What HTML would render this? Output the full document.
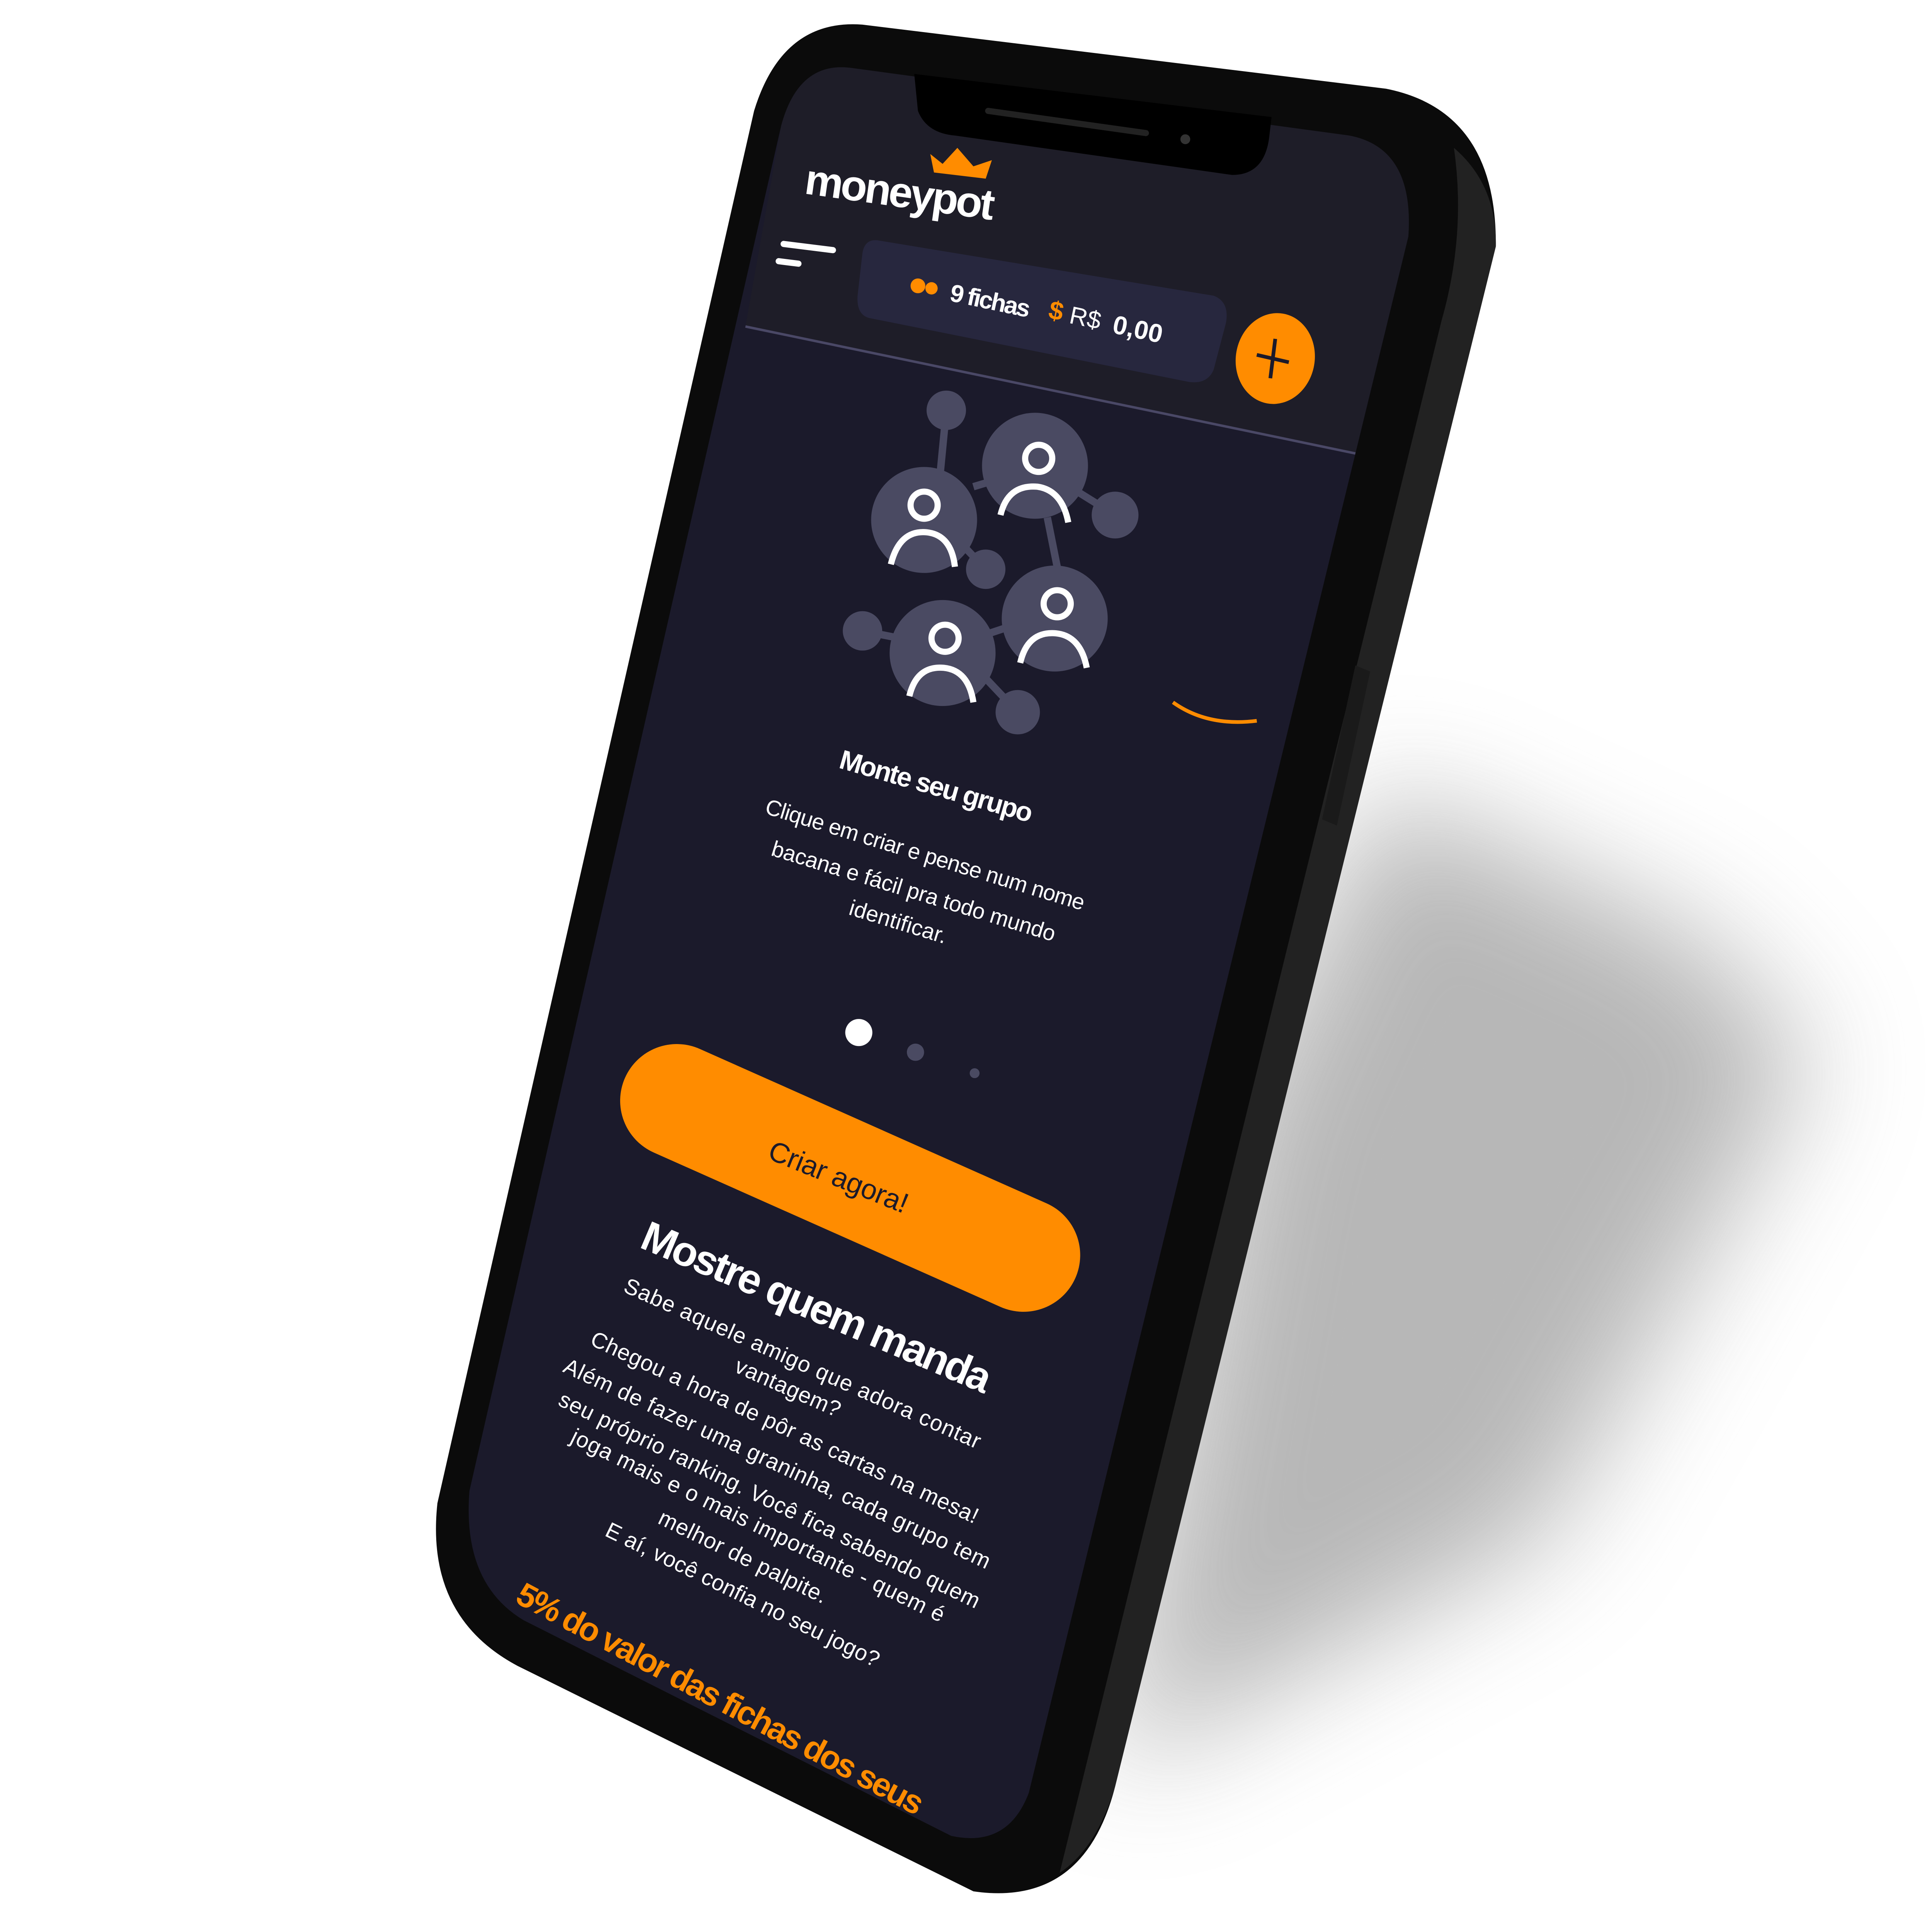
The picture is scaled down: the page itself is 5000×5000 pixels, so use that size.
<!DOCTYPE html>
<html><head><meta charset="utf-8"><style>html,body{margin:0;padding:0;background:#fff;width:5000px;height:5000px;overflow:hidden}svg{display:block}text{font-family:"Liberation Sans",sans-serif}</style></head><body>
<svg width="5000" height="5000" viewBox="0 0 1568 1568" xmlns="http://www.w3.org/2000/svg">
<defs>
<filter id="b" x="-50%" y="-50%" width="200%" height="200%"><feGaussianBlur stdDeviation="50"/></filter>
</defs>
<rect width="1568" height="1568" fill="#fff"/>
<!-- shadow -->
<path d="M1120,640 L1380,760 L1470,860 L1250,1250 L900,1440 L1000,900 Z" fill="#999" opacity="0.7" filter="url(#b)"/>
<!-- body -->
<path d="M700,20 L1125,72 Q1215,90 1214,200 L905,1450 Q880,1548 790,1535 L420,1352 Q345,1312 355,1220 L612,90 Q635,15 700,20 Z" fill="#0b0b0b"/>
<path d="M1180,120 Q1215,150 1214,200 L905,1450 Q890,1500 860,1520 L1170,260 Q1190,190 1180,120 Z" fill="#222"/>
<path d="M1100,540 L1112,545 L1085,670 L1073,665 Z" fill="#1a1a1a"/>
<!-- screen -->
<path d="M690,55 L1095,110 Q1148,120 1143,192 L835,1455 Q818,1500 772,1490 L425,1315 Q375,1285 381,1210 L634,102 Q648,50 690,55 Z" fill="#1b1a2b"/>
<path d="M690,55 L1095,110 Q1148,120 1143,192 L1100,368 L605,265 L634,102 Q648,50 690,55 Z" fill="#1e1d28"/>
<line x1="605" y1="265" x2="1100" y2="368" stroke="#4a4866" stroke-width="2"/>
<!-- notch -->
<path d="M742,60 L745,90 Q752,108 775,110 L1000,142 Q1026,142 1030,112 L1032,95 Z" fill="#000"/>
<path d="M802,90 L930,108" stroke="#222" stroke-width="5" stroke-linecap="round"/>
<circle cx="962" cy="113" r="4" fill="#333"/>
<!-- logo -->
<text x="652" y="157" font-size="35" font-weight="bold" fill="#fff" transform="rotate(8 652 157)" textLength="155">moneypot</text>
<path d="M755,125 L765,133 L777,120 L790,135 L805,130 L800,145 L758,140 Z" fill="#ff8c00"/>
<path d="M636,198 L676,203 M632,212 L648,214" stroke="#fff" stroke-width="5" stroke-linecap="round"/>
<!-- pill -->
<path d="M712,195 L985,240 Q998,245 995,262 L985,300 Q980,312 965,310 L705,258 Q695,255 696,240 L700,205 Q702,194 712,195 Z" fill="#27273e"/>
<circle cx="745" cy="232" r="6" fill="#ff8c00"/><circle cx="756" cy="234" r="5" fill="#ff8c00"/>
<text x="770" y="244" font-size="20" font-weight="bold" fill="#fff" transform="rotate(12 770 244)" textLength="66">9 fichas</text>
<text x="850" y="258" font-size="21" font-weight="bold" fill="#ff8c00" transform="rotate(12 850 258)">$</text>
<text x="867" y="262" font-size="20" fill="#fff" transform="rotate(12 867 262)">R$</text>
<text x="902" y="270" font-size="21" font-weight="bold" fill="#fff" transform="rotate(12 902 270)">0,00</text>
<ellipse cx="1035" cy="291" rx="32" ry="37" fill="#ff8c00" transform="rotate(10 1035 291)"/>
<path d="M1035,275 L1031,307 M1020,288 L1046,294" stroke="#1b1a2b" stroke-width="3"/>
<!-- network -->
<g stroke="#4a4a62" stroke-width="6" fill="#4a4a62">
<line x1="768" y1="333" x2="762" y2="395"/><line x1="760" y1="420" x2="800" y2="462"/><line x1="790" y1="395" x2="840" y2="380"/>
<line x1="860" y1="390" x2="905" y2="418"/><line x1="850" y1="420" x2="860" y2="470"/><line x1="700" y1="512" x2="765" y2="525"/>
<line x1="790" y1="540" x2="826" y2="578"/><line x1="800" y1="515" x2="830" y2="505"/>
<circle cx="768" cy="333" r="13"/><circle cx="905" cy="418" r="16"/><circle cx="800" cy="462" r="13"/><circle cx="700" cy="512" r="13"/><circle cx="826" cy="578" r="15"/>
<circle cx="750" cy="422" r="40"/><circle cx="840" cy="378" r="40"/><circle cx="856" cy="502" r="40"/><circle cx="765" cy="530" r="40"/>
</g>
<g stroke="#fff" stroke-width="5" fill="none">
<circle cx="750" cy="410" r="11"/><path d="M723,458 Q730,430 752,432 Q772,434 775,460"/>
<circle cx="843" cy="372" r="11"/><path d="M812,418 Q818,393 842,395 Q862,398 867,424"/>
<circle cx="858" cy="490" r="11"/><path d="M828,538 Q834,512 857,514 Q877,516 882,542"/>
<circle cx="767" cy="518" r="11"/><path d="M738,565 Q744,540 766,542 Q786,544 790,570"/>
</g>
<path d="M952,570 Q980,590 1020,585" stroke="#ff8c00" stroke-width="3" fill="none"/>
<!-- texts -->
<text x="680" y="623" font-size="22" font-weight="bold" fill="#fff" transform="rotate(16 680 623)" textLength="162">Monte seu grupo</text>
<text x="620" y="660" font-size="18" fill="#fff" transform="rotate(17 620 660)" textLength="270">Clique em criar e pense num nome</text>
<text x="625" y="694" font-size="18" fill="#fff" transform="rotate(17 625 694)" textLength="240">bacana e fácil pra todo mundo</text>
<text x="688" y="742" font-size="18" fill="#fff" transform="rotate(17 688 742)" textLength="82">identificar.</text>
<circle cx="697" cy="838" r="11" fill="#fff"/><circle cx="743" cy="854" r="7" fill="#4a4a62"/><circle cx="791" cy="871" r="4" fill="#4a4a62"/>
<rect x="490" y="910" width="400" height="92" rx="46" fill="#ff8c00" transform="rotate(24 690 956)"/>
<text x="622" y="940" font-size="23" fill="#1b1a2b" transform="rotate(22 622 940)" textLength="120">Criar agora!</text>
<text x="518" y="1012" font-size="34" font-weight="bold" fill="#fff" transform="rotate(23 518 1012)" textLength="305">Mostre quem manda</text>
<g font-size="18" fill="#fff">
<text x="505" y="1048" transform="rotate(24 505 1048)" textLength="315">Sabe aquele amigo que adora contar</text>
<text x="595" y="1113" transform="rotate(24 595 1113)" textLength="92">vantagem?</text>
<text x="478" y="1091" transform="rotate(25 478 1091)" textLength="345">Chegou a hora de pôr as cartas na mesa!</text>
<text x="456" y="1113" transform="rotate(25 456 1113)" textLength="380">Além de fazer uma graninha, cada grupo tem</text>
<text x="452" y="1140" transform="rotate(26 452 1140)" textLength="378">seu próprio ranking. Você fica sabendo quem</text>
<text x="462" y="1170" transform="rotate(26 462 1170)" textLength="335">joga mais e o mais importante - quem é</text>
<text x="533" y="1236" transform="rotate(26 533 1236)" textLength="150">melhor de palpite.</text>
<text x="490" y="1246" transform="rotate(26 490 1246)" textLength="245">E aí, você confia no seu jogo?</text>
</g>
<text x="417" y="1300" font-size="27" font-weight="bold" fill="#ff8c00" transform="rotate(28 417 1300)" textLength="370">5% do valor das fichas dos seus</text>
</svg>
</body></html>
